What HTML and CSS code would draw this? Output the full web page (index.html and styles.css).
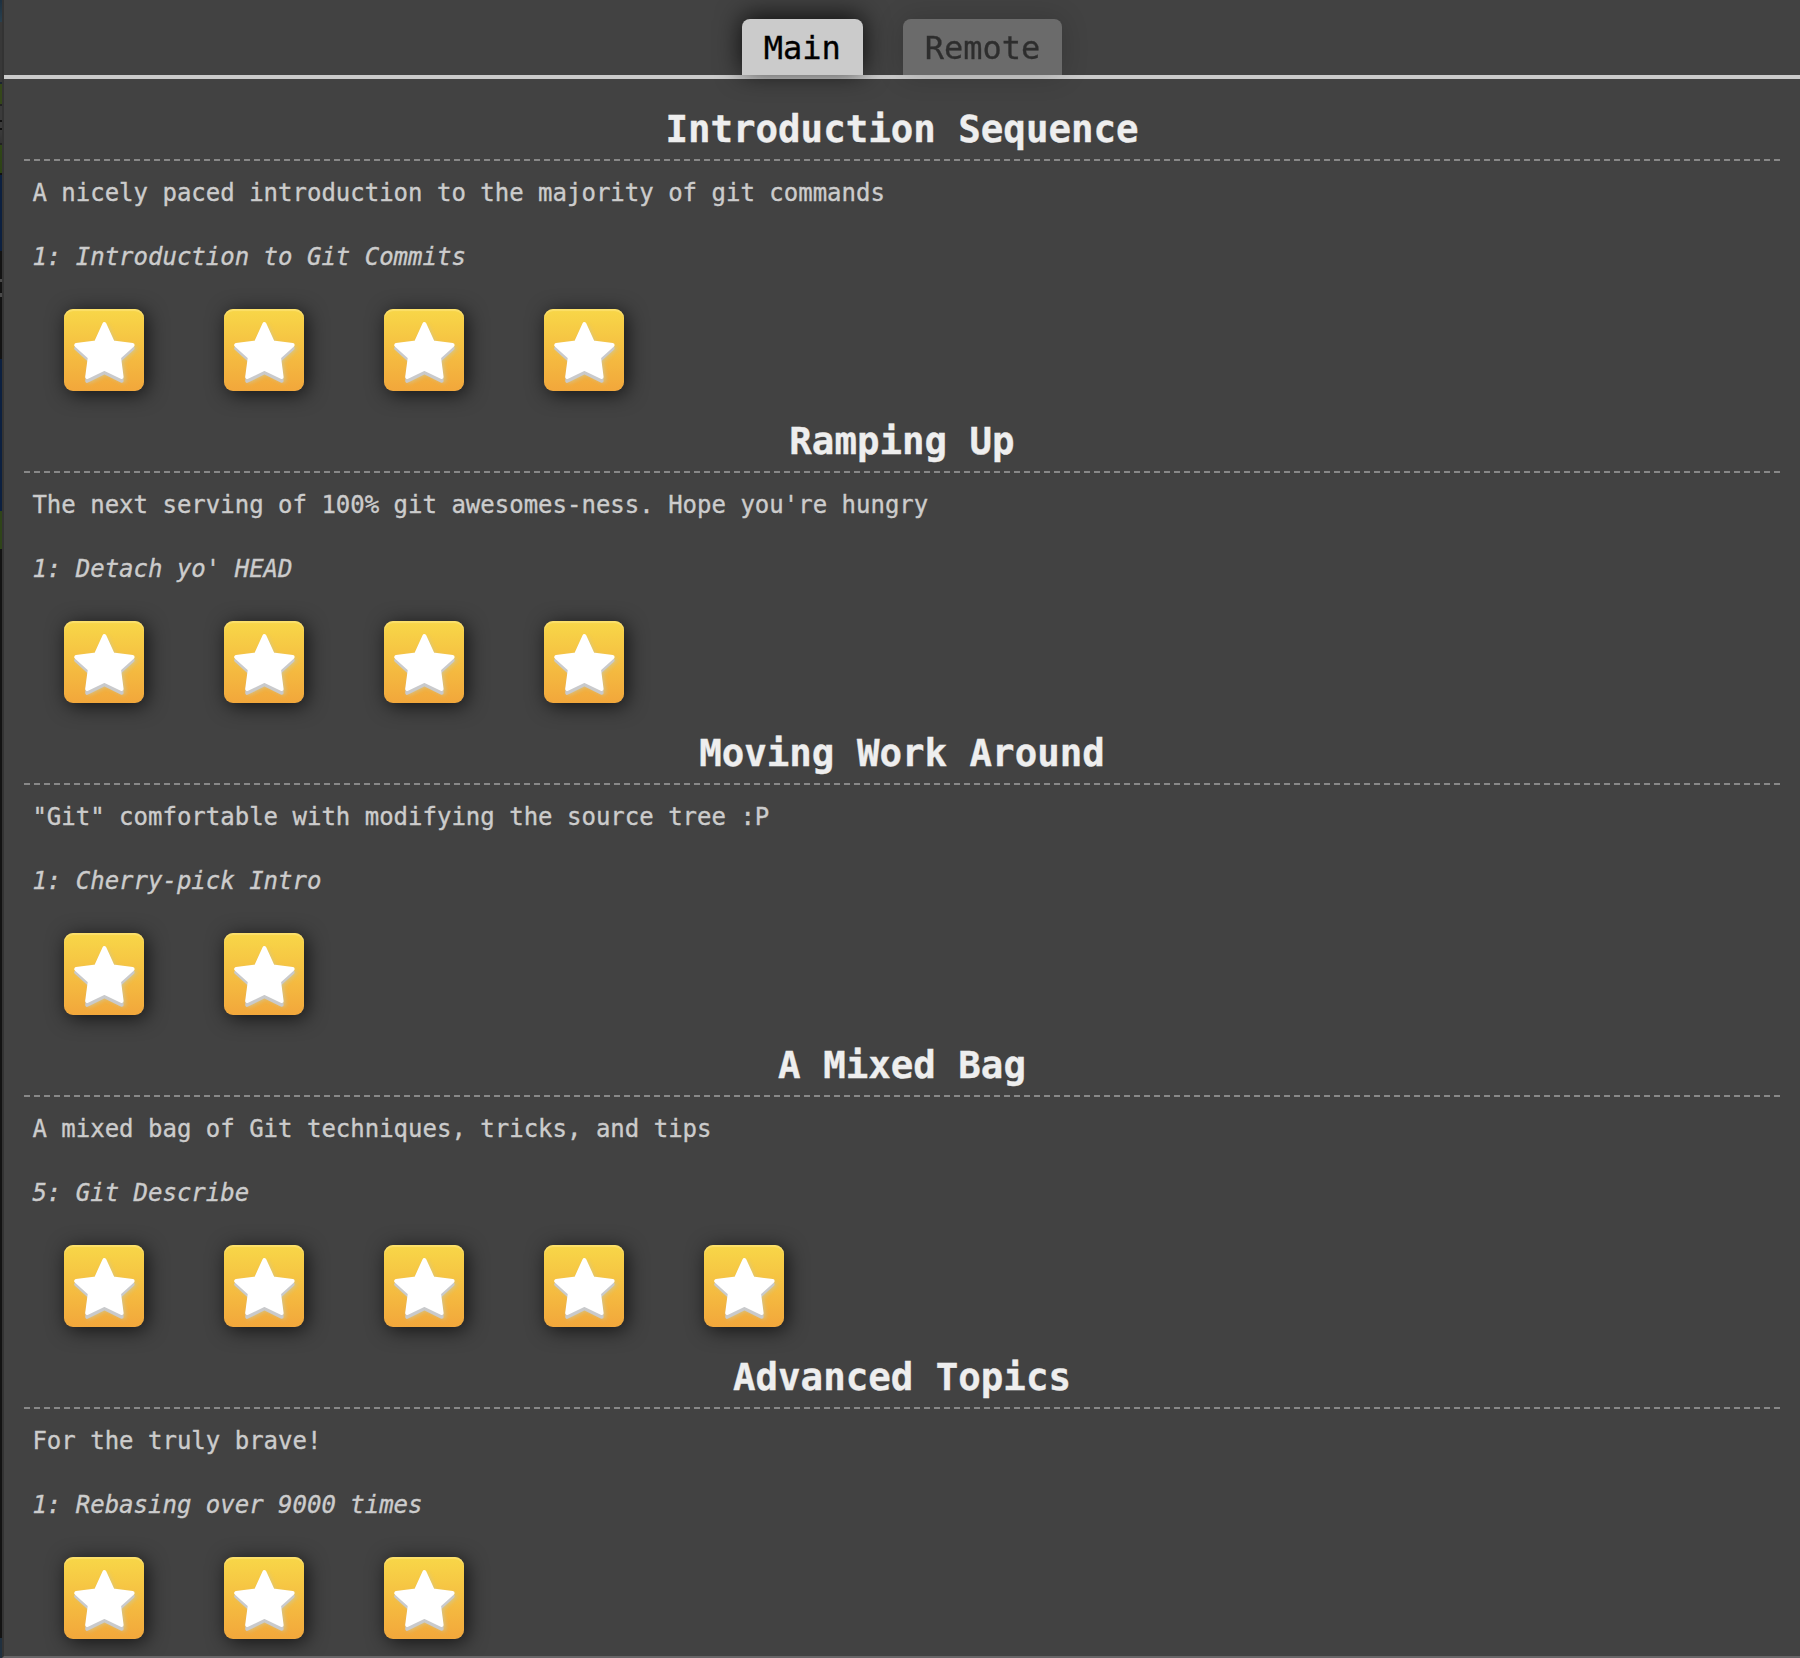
FILE: index.html
```
<!DOCTYPE html>
<html lang="en">
<head>
<meta charset="utf-8">
<title>Levels</title>
<link rel="stylesheet" href="styles.css">
</head>
<body>
<svg class="sprite" aria-hidden="true">
  <symbol id="star" viewBox="0 0 80 82">
    <g stroke-width="4" stroke-linejoin="round">
      <path class="star-edge" d="M40.4 18.5 48.6 36.6 68.6 39.3 55 51.5 57.6 71.8 40.4 63.2 23.2 71.8 25.8 51.5 12.2 39.3 32.2 36.6Z"/>
      <path class="star-face" d="M40.4 15 48.8 33.5 68.6 36 55 48.3 57.6 68 40.4 59.7 23.2 68 25.8 48.3 12.2 36 32 33.5Z"/>
    </g>
  </symbol>
</svg>
<main class="levels">
  <nav class="tabs">
    <div class="tab tab-active">Main</div>
    <div class="tab">Remote</div>
  </nav>
  <div class="sequences">
    <section class="sequence">
      <h2>Introduction Sequence</h2>
      <p>A nicely paced introduction to the majority of git commands</p>
      <p class="level-name">1: Introduction to Git Commits</p>
      <div class="tiles">
        <svg class="tile"><use href="#star"/></svg>
        <svg class="tile"><use href="#star"/></svg>
        <svg class="tile"><use href="#star"/></svg>
        <svg class="tile"><use href="#star"/></svg>
      </div>
    </section>
    <section class="sequence">
      <h2>Ramping Up</h2>
      <p>The next serving of 100% git awesomes-ness. Hope you're hungry</p>
      <p class="level-name">1: Detach yo' HEAD</p>
      <div class="tiles">
        <svg class="tile"><use href="#star"/></svg>
        <svg class="tile"><use href="#star"/></svg>
        <svg class="tile"><use href="#star"/></svg>
        <svg class="tile"><use href="#star"/></svg>
      </div>
    </section>
    <section class="sequence">
      <h2>Moving Work Around</h2>
      <p>"Git" comfortable with modifying the source tree :P</p>
      <p class="level-name">1: Cherry-pick Intro</p>
      <div class="tiles">
        <svg class="tile"><use href="#star"/></svg>
        <svg class="tile"><use href="#star"/></svg>
      </div>
    </section>
    <section class="sequence">
      <h2>A Mixed Bag</h2>
      <p>A mixed bag of Git techniques, tricks, and tips</p>
      <p class="level-name">5: Git Describe</p>
      <div class="tiles">
        <svg class="tile"><use href="#star"/></svg>
        <svg class="tile"><use href="#star"/></svg>
        <svg class="tile"><use href="#star"/></svg>
        <svg class="tile"><use href="#star"/></svg>
        <svg class="tile"><use href="#star"/></svg>
      </div>
    </section>
    <section class="sequence">
      <h2>Advanced Topics</h2>
      <p>For the truly brave!</p>
      <p class="level-name">1: Rebasing over 9000 times</p>
      <div class="tiles">
        <svg class="tile"><use href="#star"/></svg>
        <svg class="tile"><use href="#star"/></svg>
        <svg class="tile"><use href="#star"/></svg>
      </div>
    </section>
  </div>
</main>
</body>
</html>
```
FILE: styles.css
```
* { box-sizing: border-box; }

body {
  margin: 0;
  height: 1658px;
  padding-left: 2px;
  overflow: hidden;
  font-family: "DejaVu Sans Mono", monospace;
  -webkit-text-stroke: .35px currentColor;
  /* sliver of the page behind the panel */
  background: linear-gradient(
    #1d3040 0, #29404f 22px, #383838 22px, #383838 82px,
    #1b2430 82px, #1b2430 84px, #35471a 84px, #35471a 104px,
    #222 104px, #222 106px, #3b3b3b 106px, #3b3b3b 120px, #111 120px, #111 122px,
    #3b3b3b 122px, #3b3b3b 128px, #111 128px, #111 130px, #3b3b3b 130px, #333 143px,
    #222 143px, #222 145px, #304617 145px, #2d4215 173px, #111 173px, #111 175px,
    #0c2040 175px, #0c2040 251px, #131313 251px, #131313 279px,
    #4a4a4a 279px, #4a4a4a 282px, #131313 282px, #131313 293px,
    #4a4a4a 293px, #4a4a4a 297px, #131313 297px, #131313 359px,
    #0c2040 359px, #0c2040 511px, #2f4419 511px, #2f4419 549px,
    #131313 549px, #131313 1638px, #20303f 1638px);
}

.sprite { position: absolute; width: 0; height: 0; }

.levels {
  height: 1658px;
  overflow: hidden;
  border-left: 2px solid #333;
  border-bottom: 2px solid #676567;
  background: #424242;
}

.tabs {
  display: flex;
  justify-content: center;
  align-items: flex-end;
  gap: 40px;
  height: 79px;
  border-bottom: 4px solid #cbcbcb;
}

.tab {
  height: 56px;
  padding: 0 22px;
  border-radius: 8px 8px 0 0;
  background: #cbcbcb;
  color: #000;
  font-size: 32px;
  line-height: 58px;
  opacity: .3;
  box-shadow: 0 0 28px rgba(0, 0, 0, .6);
}

.tab-active {
  opacity: 1;
  box-shadow: 0 -3px 26px rgba(0, 0, 0, .8);
}

.sequences { padding: 20px 20px 0; }

.sequence { height: 312px; }

h2 {
  height: 62px;
  margin: 0;
  padding-bottom: 2px;
  color: #eee;
  font-size: 37.44px;
  line-height: 60px;
  text-align: center;
  background: repeating-linear-gradient(90deg, #888 0 6px, transparent 6px 10px) bottom / 100% 2px no-repeat;
}

p {
  margin: 0;
  padding-left: 8.4px;
  color: #ccc;
  font-size: 24px;
  line-height: 64px;
}

.level-name { font-style: italic; }

.tiles {
  display: flex;
  gap: 80px;
  padding: 20px 40px;
}

.tile {
  width: 80px;
  height: 82px;
  border-radius: 9px;
  background: linear-gradient(#f8d748, #f2a73b);
  box-shadow: 3px 3px 20px rgba(0, 0, 0, .7), inset 0 2px 1px rgba(255, 233, 140, .5);
}

.star-face { fill: #fff; stroke: #fff; }

.star-edge {
  fill: #c9cacc;
  stroke: #c9cacc;
  filter: drop-shadow(2px 0 2px rgba(205, 200, 160, .8));
}
```
